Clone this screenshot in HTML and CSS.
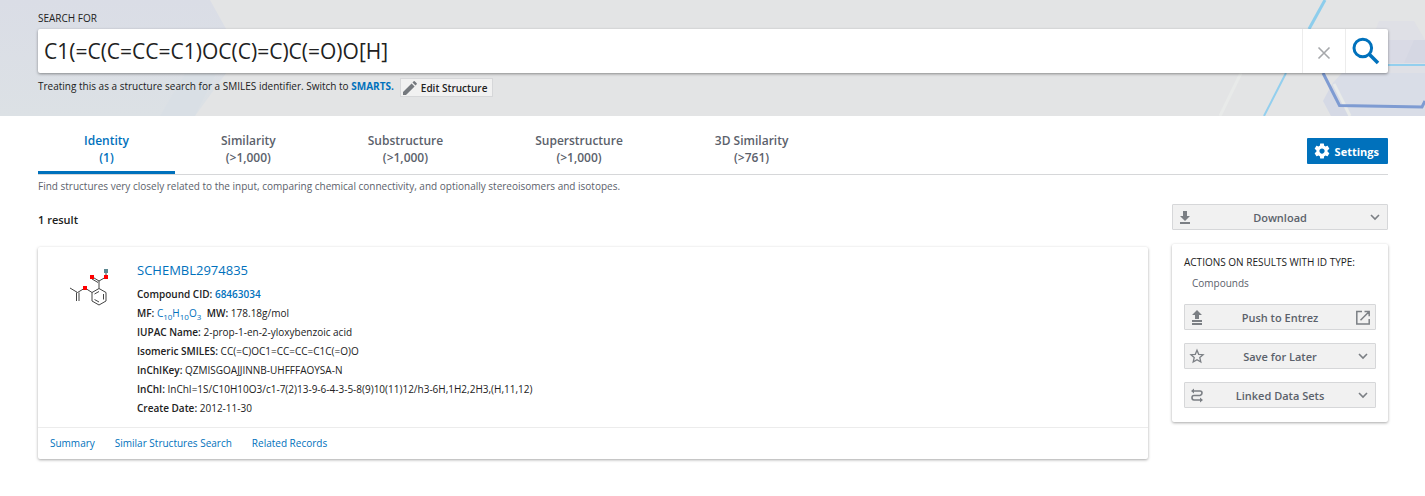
FILE: index.html
```
<!DOCTYPE html>
<html lang="en">
  <head>
    <meta charset="UTF-8" />
    <meta name="viewport" content="width=device-width, initial-scale=1" />
    <title>Compound search</title>
    <link rel="stylesheet" href="styles.css">
  </head>
  <body>
    <header class="hero">
      <svg class="hero-art hero-art-left" width="240" height="116" aria-hidden="true">
        <defs>
          <linearGradient id="haze" x1="0" y1="0" x2="0" y2="1">
            <stop offset="0" stop-color="#dadde6" />
            <stop offset="1" stop-color="#dce1e5" />
          </linearGradient>
        </defs>
        <path d="M0 0H210L240 54L195 116H0Z" fill="url(#haze)" />
        <path d="M185 74H216L195 116H160Z" fill="#d9dfe5" />
      </svg>
      <svg class="hero-art hero-art-right" width="225" height="116" aria-hidden="true">
        <path d="M179 21H214L225 40V84H175L168 50Z" fill="#dfe0e6" />
        <path d="M160 40H225V63H172Z" fill="#d9dae5" />
        <path d="M214 40H225V63H204Z" fill="#d5d7e3" />
        <path d="M142 73H225V116H150L132 84Z" fill="#d9dde7" />
        <path d="M132 84L123 101L131 116H150Z" fill="#d5d9e5" />
        <path d="M134 84L150 116M41 73L20 116" stroke="#e8eae9" stroke-width="3" />
        <path d="M125 0L109 29" stroke="#8dcdec" stroke-width="3" />
        <path d="M86 73L64 116M180 65H225" stroke="#93cfee" stroke-width="2" />
        <path d="M123 73L139.500 105.500L222 107L225 101" fill="none" stroke="#7e9bd2" stroke-width="3" />
      </svg>

      <form class="search">
        <label class="search-label" for="query">SEARCH FOR</label>
        <div class="search-box">
          <input class="search-input" type="text" id="query" value="C1(=C(C=CC=C1)OC(C)=C)C(=O)O[H]" />
          <button class="search-clear" type="button" aria-label="Clear">
            <svg width="14" height="14" viewBox="0 0 14 14">
              <path d="M1.500 1.500L12.500 12.500M12.500 1.500L1.500 12.500" stroke="#a6a8ab" stroke-width="1.600" />
            </svg>
          </button>
          <button class="search-submit" type="submit" aria-label="Search">
            <svg width="28" height="28" viewBox="0 0 28 28" fill="none" stroke="#0071bc">
              <circle cx="10.800" cy="11" r="8.800" stroke-width="3" />
              <path d="M17 17L26 26" stroke-width="3.600" />
            </svg>
          </button>
        </div>
        <div class="search-note">
          <span>Treating this as a structure search for a SMILES identifier. Switch to <a class="strong" href="#">SMARTS.</a></span>
          <button class="edit-button" type="button">
            <svg width="14" height="14" viewBox="0 0 14 14" fill="#75797e">
              <path d="M0 14V11L8.600 2.400L11.600 5.400L3 14ZM9.500 1.500L10.700 .3Q11.200 -.1 11.700 .3L13.700 2.300Q14.100 2.800 13.700 3.300L12.500 4.500Z" />
            </svg>
            Edit Structure
          </button>
        </div>
      </form>
    </header>

    <main class="page">
      <div class="tab-bar">
        <nav class="tabs">
          <a class="tab active" href="#">Identity<br />(1)</a>
          <a class="tab" href="#">Similarity<br />(&gt;1,000)</a>
          <a class="tab" href="#">Substructure<br />(&gt;1,000)</a>
          <a class="tab" href="#">Superstructure<br />(&gt;1,000)</a>
          <a class="tab" href="#">3D Similarity<br />(&gt;761)</a>
        </nav>
        <button class="settings" type="button">
          <svg width="18" height="18" viewBox="0 0 24 24" fill="#fff">
            <path d="M19.430 12.980c.04-.32.07-.64.07-.98s-.03-.66-.07-.98l2.110-1.650c.19-.15.24-.42.12-.64l-2-3.460c-.12-.22-.39-.3-.61-.22l-2.490 1c-.52-.4-1.080-.73-1.690-.98l-.38-2.650C14.460 2.180 14.250 2 14 2h-4c-.25 0-.46.18-.49.42l-.38 2.650c-.61.25-1.170.59-1.690.98l-2.490-1c-.23-.09-.49 0-.61.22l-2 3.460c-.13.22-.07.49.12.64l2.110 1.650c-.04.32-.07.65-.07.98s.03.66.07.98l-2.110 1.650c-.19.15-.24.42-.12.64l2 3.460c.12.22.39.3.61.22l2.490-1c.52.4 1.080.73 1.690.98l.38 2.650c.03.24.24.42.49.42h4c.25 0 .46-.18.49-.42l.38-2.650c.61-.25 1.170-.59 1.690-.98l2.490 1c.23.09.49 0 .61-.22l2-3.460c.12-.22.07-.49-.12-.64l-2.110-1.650zM12 15.500c-1.930 0-3.500-1.570-3.500-3.500s1.570-3.500 3.500-3.500 3.500 1.570 3.500 3.500-1.570 3.500-3.500 3.500z" />
          </svg>
          Settings
        </button>
      </div>
      <p class="tab-description">Find structures very closely related to the input, comparing chemical connectivity, and optionally stereoisomers and isotopes.</p>

      <div class="columns">
        <section class="results">
          <h2 class="result-count">1 result</h2>
          <article class="card">
            <div class="card-body">
              <svg class="molecule" width="42" height="42" viewBox="0 0 42 42" fill="none" stroke="#444" stroke-width="1">
                <path d="M30 20.500L37 24.500V33L30 37L23 33V24.500ZM30 23.500L25.500 26M25.500 31.500L30 34M34.500 26V31.500" />
                <path d="M30 20.500V13L37 9V3M30 13L23.500 9M29 14.500L23 11" />
                <path d="M23 24.500L16 20L8.500 24.500L1 20M7.500 24.500V33M10 24.500V33" />
                <path d="M21 7H25V11H21ZM35 7H39V11H35ZM14 18H18V22H14Z" fill="#f00" stroke="none" />
                <path d="M35 1H39V5H35Z" fill="#5b8790" stroke="none" />
              </svg>
              <div class="card-text">
                <h3 class="card-title"><a href="#">SCHEMBL2974835</a></h3>
                <ul class="facts">
                  <li><b>Compound CID:</b> <a class="medium" href="#">68463034</a></li>
                  <li><b>MF:</b> <a href="#">C<sub>10</sub>H<sub>10</sub>O<sub>3</sub></a> <b class="mass">MW:</b> 178.18g/mol</li>
                  <li><b>IUPAC Name:</b> 2-prop-1-en-2-yloxybenzoic acid</li>
                  <li><b>Isomeric SMILES:</b> CC(=C)OC1=CC=CC=C1C(=O)O</li>
                  <li><b>InChIKey:</b> QZMISGOAJJINNB-UHFFFAOYSA-N</li>
                  <li><b>InChI:</b> InChI=1S/C10H10O3/c1-7(2)13-9-6-4-3-5-8(9)10(11)12/h3-6H,1H2,2H3,(H,11,12)</li>
                  <li><b>Create Date:</b> 2012-11-30</li>
                </ul>
              </div>
            </div>
            <div class="card-links">
              <a href="#">Summary</a>
              <a href="#">Similar Structures Search</a>
              <a href="#">Related Records</a>
            </div>
          </article>
        </section>

        <aside class="sidebar">
          <button class="action" type="button">
            <svg width="16" height="16" viewBox="0 0 16 16" fill="#7b7f84">
              <path d="M6 2H10V7H13L8 12L3 7H6ZM3 13H13V15H3Z" />
            </svg>
            <span>Download</span>
            <svg width="16" height="16" viewBox="0 0 16 16" fill="none" stroke="#7b7f84" stroke-width="1.600">
              <path d="M4 6L8 10L12 6" />
            </svg>
          </button>
          <div class="panel">
            <h4 class="panel-title">ACTIONS ON RESULTS WITH ID TYPE:</h4>
            <p class="panel-type">Compounds</p>
            <button class="action" type="button">
              <svg width="16" height="16" viewBox="0 0 16 16" fill="#7b7f84">
                <path d="M8 1L13 6H10V10H6V6H3ZM3 11H13V13H3ZM3 14H13V16H3Z" />
              </svg>
              <span>Push to Entrez</span>
              <svg width="16" height="16" viewBox="0 0 16 16" fill="none" stroke="#7b7f84" stroke-width="1.500">
                <path d="M7 2.500H1.800V15H14.200V10M9.500 2.500H14.200V7.200M14 2.700L5.500 11.200" />
              </svg>
            </button>
            <button class="action" type="button">
              <svg width="16" height="16" viewBox="0 0 16 16" fill="none" stroke="#7b7f84" stroke-width="1.300">
                <path d="M8 2.200L9.700 6.300L14.100 6.700L10.800 9.600L11.800 14L8 11.700L4.200 14L5.200 9.600L1.900 6.700L6.300 6.300Z" />
              </svg>
              <span>Save for Later</span>
              <svg width="16" height="16" viewBox="0 0 16 16" fill="none" stroke="#7b7f84" stroke-width="1.600">
                <path d="M4 6L8 10L12 6" />
              </svg>
            </button>
            <button class="action" type="button">
              <svg width="16" height="16" viewBox="0 0 16 16" fill="none" stroke="#7b7f84" stroke-width="1.600">
                <path d="M4 4H11Q13 4 13 6T11 8.500H5Q3 8.500 3 10.700T5 13H12" />
                <path d="M5 1.500L2 4L5 6.500ZM11 10.500L14 13L11 15.500Z" fill="#7b7f84" stroke="none" />
              </svg>
              <span>Linked Data Sets</span>
              <svg width="16" height="16" viewBox="0 0 16 16" fill="none" stroke="#7b7f84" stroke-width="1.600">
                <path d="M4 6L8 10L12 6" />
              </svg>
            </button>
          </div>
        </aside>
      </div>
    </main>
  </body>
</html>
```

FILE: styles.css
```
* {
  box-sizing: border-box;
}
body {
  margin: 0;
  font-family: "Open Sans", "Noto Sans", sans-serif;
  font-size: 10px;
  line-height: 16px;
  color: #212121;
  background: #fff;
}
h2,
h3,
h4,
p,
ul {
  margin: 0;
  padding: 0;
}
a {
  color: #0071bc;
  text-decoration: none;
}
button {
  font-family: inherit;
  cursor: pointer;
}
svg {
  display: block;
  flex: none;
}

/* Search header */
.hero {
  position: relative;
  padding: 10px 37px 19px 38px;
  background: #e3e4e5;
}
.hero-art {
  position: absolute;
  top: 0;
}
.hero-art-left {
  left: 0;
}
.hero-art-right {
  right: 0;
}
.search {
  position: relative;
}
.search-label {
  display: block;
  margin-bottom: 3px;
}
.search-box {
  display: flex;
  height: 44px;
  background: #fff;
  border-radius: 2px;
  box-shadow: 0 1px 3px rgba(0, 0, 0, 0.4);
}
.search-input {
  flex: 1;
  min-width: 0;
  padding: 0 6px;
  border: none;
  background: none;
  font-family: inherit;
  font-size: 21px;
  color: #212121;
}
.search-clear,
.search-submit {
  display: flex;
  align-items: center;
  justify-content: center;
  width: 43px;
  padding: 4px 0 0;
  border: none;
  border-left: 1px solid #ececec;
  background: none;
}
.search-submit {
  padding: 0 2px 0 0;
}
.search-note {
  display: flex;
  align-items: flex-start;
  gap: 6px;
  margin-top: 5px;
}
.strong {
  font-weight: bold;
}
.edit-button {
  display: flex;
  align-items: center;
  gap: 4px;
  height: 19px;
  padding: 0 5px 0 2px;
  border: 1px solid #d6d7d9;
  background: #f1f1f1;
  font-size: 10px;
  font-weight: 600;
  color: #212121;
}

/* Tabs */
.page {
  padding: 0 37px 36px 38px;
}
.tab-bar {
  display: flex;
  justify-content: space-between;
  align-items: center;
  border-bottom: 1px solid #d6d7d9;
}
.tabs {
  display: flex;
}
.tab {
  padding: 16px 46px 5px;
  border-bottom: 3px solid transparent;
  font-size: 12px;
  line-height: 17px;
  font-weight: 600;
  text-align: center;
  color: #5b616b;
}
.tab.active {
  color: #0071bc;
  border-bottom-color: #0071bc;
}
.settings {
  display: flex;
  align-items: center;
  gap: 4px;
  height: 26px;
  margin-top: 12px;
  padding: 0 9px 0 6px;
  border: none;
  border-radius: 1px;
  background: #0071bc;
  color: #fff;
  font-size: 11px;
  font-weight: bold;
}
.tab-description {
  margin-top: 3px;
  color: #5b616b;
}

/* Results */
.columns {
  display: flex;
  align-items: flex-start;
  gap: 24px;
  margin-top: 10px;
}
.results {
  flex: 1;
  min-width: 0;
}
.result-count {
  margin: 8px 0 19px;
  font-size: 11px;
  font-weight: 600;
}
.card,
.panel {
  border-radius: 2px;
  background: #fff;
  box-shadow: 0 1px 3px rgba(0, 0, 0, 0.35);
}
.card-body {
  display: flex;
  gap: 26px;
  padding: 13px 31px 9px;
}
.molecule {
  margin-top: 8px;
}
.card-title {
  margin-bottom: 5px;
  font-size: 13px;
  line-height: 20px;
  font-weight: 500;
}
.facts {
  list-style: none;
}
.facts li {
  height: 19px;
  line-height: 19px;
}
.facts b,
.medium {
  font-weight: 600;
}
.facts sub {
  font-size: 8px;
  line-height: 0;
}
.mass {
  margin-left: 3px;
}
.card-links {
  display: flex;
  gap: 20px;
  padding: 7px 12px 8px;
  border-top: 1px solid #ececec;
  font-weight: 500;
}

/* Sidebar */
.sidebar {
  width: 216px;
}
.action {
  display: flex;
  align-items: center;
  width: 100%;
  height: 26px;
  padding: 0 4px;
  border: 1px solid #d6d7d9;
  border-radius: 1px;
  background: #f1f1f1;
  font-size: 11px;
  font-weight: 600;
  color: #5b616b;
}
.action span {
  flex: 1;
}
.panel {
  display: flex;
  flex-direction: column;
  gap: 13px;
  margin-top: 14px;
  padding: 10px 12px 14px;
}
.panel-title {
  font-size: 10px;
  font-weight: 400;
  white-space: nowrap;
}
.panel-type {
  margin-top: -8px;
  padding-left: 8px;
  font-weight: 500;
  color: #5b616b;
}
```
